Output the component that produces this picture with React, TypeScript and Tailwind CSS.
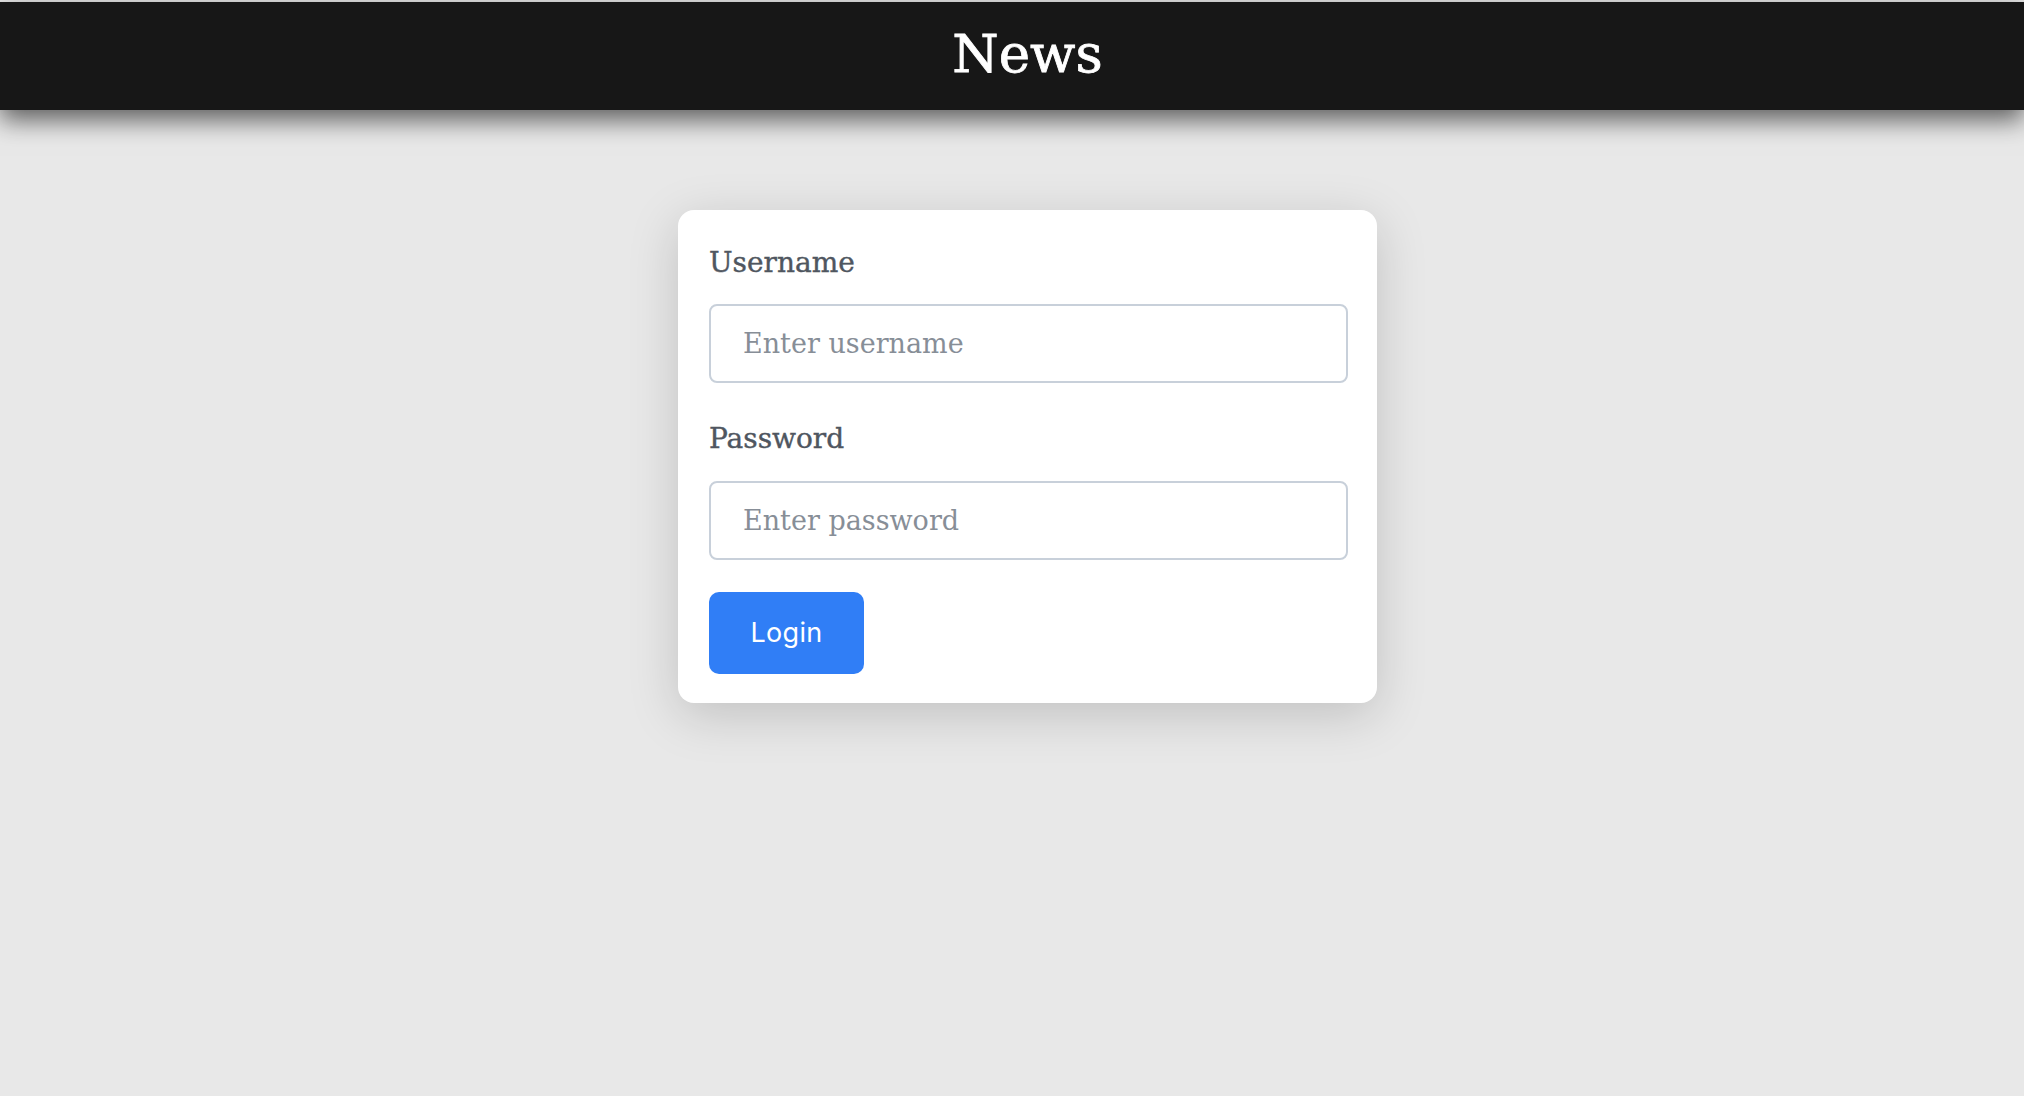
export default function App() {
  return (
    <div className="min-h-screen bg-[#e8e8e8] pt-[2px]">
      <header className="relative z-10 flex h-[108px] items-center justify-center bg-[#171717] pb-[6px] pl-[31px] shadow-[0_10px_24px_rgba(0,0,0,0.6)]">
        <h1 className="text-[53px] leading-none text-white [font-family:'DejaVu_Serif',serif] [-webkit-text-stroke:0.8px_white]">
          News
        </h1>
      </header>
      <main className="flex justify-center pl-[31px] pt-[100px]">
        <LoginCard />
      </main>
    </div>
  );
}

function LoginCard() {
  return (
    <form
      className="w-[699px] rounded-[16px] bg-white pl-[31px] pr-[29px] pt-[35px] pb-[29px] shadow-[0_12px_50px_rgba(0,0,0,0.17)] [font-family:'DejaVu_Serif',serif]"
      onSubmit={(e) => e.preventDefault()}
    >
      <label className="block text-[28px] leading-[36px] text-[#4f5660] [-webkit-text-stroke:0.4px_#4f5660]">
        Username
      </label>
      <input
        type="text"
        placeholder="Enter username"
        className="mt-[23px] block h-[79px] w-full rounded-[8px] border-2 border-[#c8d0da] bg-white pl-[32px] text-[27px] text-[#374151] outline-none placeholder:text-[#878e97]"
      />
      <label className="mt-[38px] block text-[28px] leading-[36px] text-[#4f5660] [-webkit-text-stroke:0.4px_#4f5660]">
        Password
      </label>
      <input
        type="password"
        placeholder="Enter password"
        className="mt-[24px] block h-[79px] w-full rounded-[8px] border-2 border-[#c8d0da] bg-white pl-[32px] text-[27px] text-[#374151] outline-none placeholder:text-[#878e97]"
      />
      <button
        type="submit"
        className="mt-[32px] flex h-[82px] w-[155px] items-center justify-center rounded-[10px] bg-[#307ef6] text-[27px] tracking-[0.3px] text-white [font-family:Inter,sans-serif]"
      >
        Login
      </button>
    </form>
  );
}
